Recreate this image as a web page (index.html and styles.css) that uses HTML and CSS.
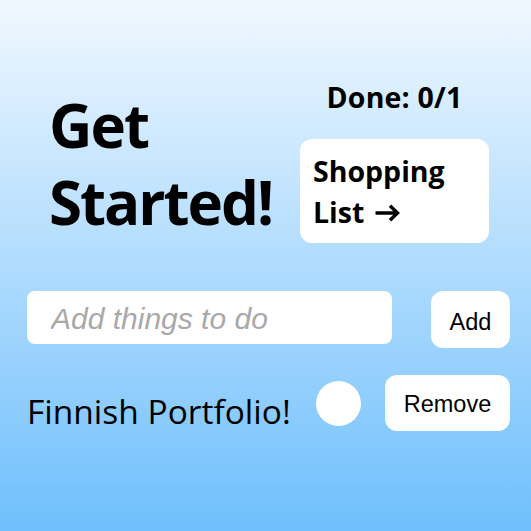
FILE: index.html
```html
<!DOCTYPE html>
<html>
<head>
<meta charset="utf-8">
<link rel="stylesheet" href="styles.css">
</head>
<body>
<div class="app">
  <div class="top">
    <h1 class="title">Get<br>Started!</h1>
    <div class="side">
      <div class="done">Done: 0/1</div>
      <a class="card">Shopping<br>List <svg class="arrow" width="26" height="18" viewBox="0 0 26 18"><path d="M1.5 9H23.5M16 1.8L23.5 9L16 16.2" fill="none" stroke="#000" stroke-width="3.4" stroke-linecap="butt" stroke-linejoin="miter"/></svg></a>
    </div>
  </div>
  <div class="entry">
    <input class="field" type="text" placeholder="Add things to do">
    <button class="btn add">Add</button>
  </div>
  <div class="item">
    <span class="item-text">Finnish Portfolio!</span>
    <span class="check"></span>
    <button class="btn remove">Remove</button>
  </div>
</div>
</body>
</html>
```

FILE: styles.css
```css
html, body {
  margin: 0;
  padding: 0;
}
body {
  width: 531px;
  height: 531px;
  background: linear-gradient(180deg, #f0f8ff 0%, #6fbffc 100%);
  font-family: "Open Sans", "Noto Sans", sans-serif;
  color: #000;
  overflow: hidden;
}
.app {
  display: flex;
  flex-direction: column;
}
.top {
  display: flex;
  justify-content: space-between;
  padding: 81px 42px 0 49px;
}
.title {
  margin: 6px 0 0 0;
  font-size: 60px;
  line-height: 77px;
  font-weight: 700;
  letter-spacing: -2px;
}
.side {
  width: 189px;
  display: flex;
  flex-direction: column;
  align-items: center;
}
.done {
  font-size: 28.5px;
  line-height: 32px;
  font-weight: 700;
  letter-spacing: 0.2px;
}
.card {
  align-self: stretch;
  margin-top: 26px;
  background: #fff;
  border-radius: 12px;
  padding: 12px 13px 10px 13px;
  font-size: 28.5px;
  line-height: 41px;
  font-weight: 700;
}
.arrow {
  display: inline-block;
  vertical-align: 1px;
  margin-left: 2px;
}
.entry {
  display: flex;
  align-items: flex-start;
  gap: 39px;
  margin-top: 48px;
  padding: 0 21px 0 27px;
}
.field {
  width: 365px;
  height: 53px;
  box-sizing: border-box;
  border: none;
  border-radius: 8px;
  background: #fff;
  padding: 2px 0 0 24px;
  font-family: "Liberation Sans", Arial, sans-serif;
  font-style: italic;
  font-size: 30px;
  outline: none;
}
.field::placeholder {
  color: #a9a9a9;
}
.btn {
  border: none;
  background: #fff;
  border-radius: 12px;
  font-family: "Liberation Sans", Arial, sans-serif;
  font-size: 23.5px;
  color: #000;
  padding: 5px 0 0 0;
  display: flex;
  align-items: center;
  justify-content: center;
}
.add {
  width: 79px;
  height: 57px;
}
.item {
  display: flex;
  align-items: flex-start;
  margin-top: 27px;
  padding: 0 21px 0 27px;
}
.item-text {
  flex: 1;
  margin-top: 8px;
  font-size: 33.5px;
  line-height: 56px;
  font-weight: 400;
}
.check {
  width: 45px;
  height: 45px;
  margin: 6px 24px 0 0;
  border-radius: 50%;
  background: #fff;
}
.remove {
  width: 125px;
  height: 56px;
  padding-top: 2px;
}
```
